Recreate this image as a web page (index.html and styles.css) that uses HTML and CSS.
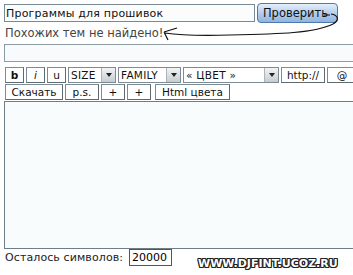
FILE: index.html
```html
<!DOCTYPE html>
<html lang="ru">
<head>
    <meta charset="UTF-8">
    <title>Поиск тем</title>
    <link rel="stylesheet" href="styles.css">
</head>
<body>
    <div class="page">
        <div class="search-row">
            <input type="text" class="title-input" value="Программы для прошивок">
            <button class="check-btn">Проверить</button>
        </div>
        <div class="notice">Похожих тем не найдено!</div>
        <input type="text" class="wide-input">
        <div class="toolbar">
            <span class="tb-btn tb-b">b</span>
            <span class="tb-btn tb-i">i</span>
            <span class="tb-btn">u</span>
            <span class="tb-select sel-size"><span class="sel-text">SIZE</span><span class="sel-arrow"></span></span>
            <span class="tb-select sel-family"><span class="sel-text">FAMILY</span><span class="sel-arrow"></span></span>
            <span class="tb-select sel-color"><span class="sel-text">« ЦВЕТ »</span><span class="sel-arrow"></span></span>
            <span class="tb-btn tb-http">http://</span>
            <span class="tb-btn tb-at">@</span>
        </div>
        <div class="toolbar toolbar2">
            <span class="tb-btn tb-dl">Скачать</span>
            <span class="tb-btn tb-ps">p.s.</span>
            <span class="tb-btn tb-plus">+</span>
            <span class="tb-btn tb-plus">+</span>
            <span class="tb-btn tb-html">Html цвета</span>
        </div>
        <textarea class="message"></textarea>
        <div class="counter">
            Осталось символов:
            <input type="text" class="counter-input" value="20000">
        </div>
    </div>
    <!-- рисованная стрелка поверх -->
    <svg class="scribble" width="353" height="60" viewBox="0 0 353 60">
        <path d="M164 32 L177 28 M164 32 L168 40 M165 33 C178 35 192 36 230 35 C280 34 315 33 333 24 C340 20 338 15 331 14 M330 15 L324 15" fill="none" stroke="#111" stroke-width="1.2"/>
    </svg>
    <div class="watermark">WWW.DJFINT.UCOZ.RU</div>
</body>
</html>
```

FILE: styles.css
```css
* {
    margin: 0;
    padding: 0;
    box-sizing: border-box;
}
body, html {
    height: 100%;
    font-family: Verdana, "DejaVu Sans", sans-serif;
    background-color: #fff;
    overflow: hidden;
}
body {
    position: relative;
}
.page {
    padding: 3px 0 0 4px;
}
.search-row {
    display: flex;
    align-items: center;
    gap: 2px;
}
.title-input {
    width: 251px;
    height: 18px;
    border: 1px solid #7a8a94;
    padding: 0 1px;
    font-family: Verdana, "DejaVu Sans", sans-serif;
    font-size: 11px;
    letter-spacing: 0.2px;
    color: #111;
    background: #fbfdfd;
}
.check-btn {
    width: 81px;
    height: 20px;
    border: 1px solid #4f79a8;
    border-radius: 4px;
    background: linear-gradient(#e4effa, #b4cfee 50%, #8fb3e0);
    font-family: Verdana, "DejaVu Sans", sans-serif;
    font-size: 11.5px;
    color: #111;
    padding-right: 4px;
}
.notice {
    margin: 3px 0 0 1px;
    font-size: 11.5px;
    line-height: 15px;
    color: #444;
    height: 15px;
}
.wide-input {
    display: block;
    width: 360px;
    height: 18px;
    margin-top: 3px;
    border: 1px solid #8c9ba4;
    background: #f7fbfc;
}
.toolbar {
    display: flex;
    gap: 2px;
    margin-top: 5px;
    margin-left: 1px;
    white-space: nowrap;
}
.toolbar2 {
    margin-top: 1px;
}
.tb-btn {
    display: flex;
    align-items: center;
    justify-content: center;
    height: 16px;
    width: 19px;
    border: 1px solid #7d8c94;
    border-right-color: #5d6a70;
    border-bottom-color: #5d6a70;
    background: #fff;
    font-size: 10.5px;
    color: #111;
    flex-shrink: 0;
}
.tb-b {
    font-weight: bold;
}
.tb-i {
    font-style: italic;
}
.tb-http {
    width: 44px;
}
.tb-at {
    width: 30px;
}
.tb-dl {
    width: 58px;
}
.tb-ps {
    width: 34px;
}
.tb-plus {
    width: 24px;
}
.tb-html {
    width: 75px;
    margin-left: 2px;
}
.tb-select {
    display: flex;
    align-items: center;
    height: 16px;
    border: 1px solid #7d8c94;
    background: #fff;
    font-size: 10.5px;
    color: #111;
    flex-shrink: 0;
}
.sel-text {
    flex: 1;
    padding-left: 2px;
    letter-spacing: 0.3px;
}
.sel-arrow {
    position: relative;
    width: 14px;
    height: 14px;
    background: linear-gradient(#f2f4f5, #c6ccd0);
    border-left: 1px solid #aab3b8;
}
.sel-arrow::after {
    content: "";
    position: absolute;
    left: 4px;
    top: 5px;
    border-left: 3px solid transparent;
    border-right: 3px solid transparent;
    border-top: 4px solid #222;
}
.sel-size {
    width: 48px;
}
.sel-family {
    width: 63px;
}
.sel-color {
    width: 96px;
}
.message {
    display: block;
    width: 360px;
    height: 148px;
    margin-top: 1px;
    border: 1px solid #6f7d86;
    background: #f9fcfd;
    resize: none;
}
.counter {
    display: flex;
    align-items: center;
    gap: 6px;
    margin-left: 1px;
    font-size: 11px;
    color: #222;
    letter-spacing: 0.1px;
}
.counter-input {
    width: 43px;
    height: 17px;
    border: 1px solid #555;
    padding: 0 2px;
    font-family: Verdana, "DejaVu Sans", sans-serif;
    font-size: 11px;
    color: #000;
}
.scribble {
    position: absolute;
    left: 0;
    top: 0;
}
.watermark {
    position: absolute;
    left: 198px;
    top: 257px;
    font-family: "DejaVu Sans", sans-serif;
    font-size: 11px;
    font-weight: bold;
    color: #fff;
    text-shadow: 1px 0 0 #222, -1px 0 0 #222, 0 1px 0 #222, 0 -1px 0 #222, 1px 1px 0 #222, -1px -1px 0 #222, 1px -1px 0 #222, -1px 1px 0 #222;
}
```
